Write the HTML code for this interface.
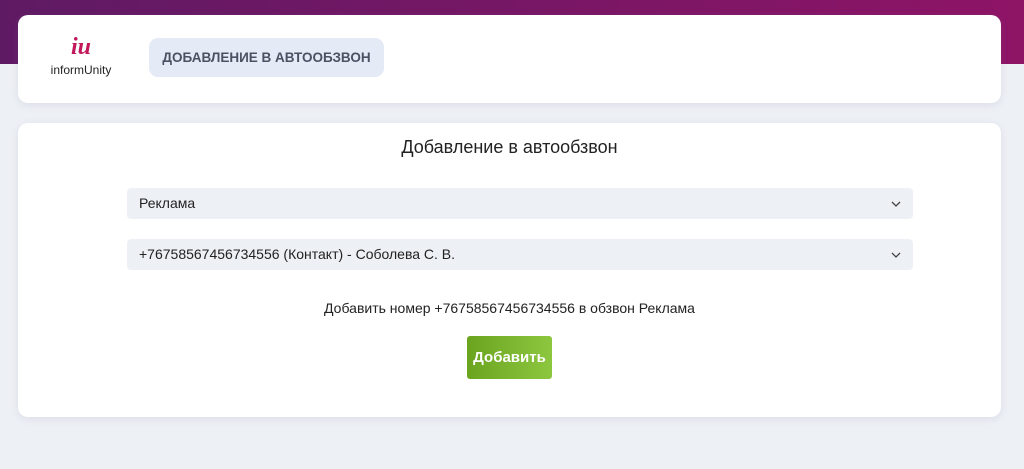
<!DOCTYPE html>
<html><head><meta charset="utf-8"><style>
*{box-sizing:border-box;margin:0;padding:0}
body{width:1024px;height:469px;background:#edf0f5;font-family:"Liberation Sans",sans-serif;position:relative;overflow:hidden}
.bg{position:absolute;left:0;top:0;width:1024px;height:64px;background:linear-gradient(90deg,#5f1a64,#8e1466)}
.card{position:absolute;left:18px;width:983px;background:#fff;border-radius:10px;box-shadow:0 2px 8px rgba(120,130,160,.15)}
.h{top:15px;height:88px}
.m{top:123px;height:294px}
.pill{position:absolute;left:131px;top:23px;width:235px;height:39px;background:#e4eaf6;border-radius:9px;color:#4b5162;font-weight:bold;font-size:13.5px;line-height:39px;text-align:center}
.logo{position:absolute;left:28px;top:21px;width:70px;text-align:center}
.sel{position:absolute;left:109px;width:786px;height:31px;background:#edf0f4;border-radius:4px;font-size:14px;color:#222;line-height:31px;padding-left:12px}
.sel svg{position:absolute;right:12px;top:13px}
.btn{position:absolute;left:449px;top:213px;width:85px;height:43px;border-radius:3px;background:linear-gradient(90deg,#6ba520,#8dc63f);color:#fff;font-weight:bold;font-size:15px;line-height:43px;text-align:center}
</style></head><body>
<div class="bg"></div>
<div class="card h">
 <div class="logo"><div style="font-family:'Liberation Serif',serif;font-style:italic;font-weight:bold;color:#c2185b;font-size:24px;line-height:22px">iu</div><div style="font-size:12px;color:#222;margin-top:5px">informUnity</div></div>
 <div class="pill">ДОБАВЛЕНИЕ В АВТООБЗВОН</div>
</div>
<div class="card m">
 <div style="position:absolute;left:0;right:0;top:14px;text-align:center;font-size:18px;color:#222">Добавление в автообзвон</div>
 <div class="sel" style="top:65px">Реклама<svg width="10" height="7" viewBox="0 0 10 7"><path d="M1 1l4 4 4-4" stroke="#444" stroke-width="1.3" fill="none"/></svg></div>
 <div class="sel" style="top:116px">+76758567456734556 (Контакт) - Соболева С. В.<svg width="10" height="7" viewBox="0 0 10 7"><path d="M1 1l4 4 4-4" stroke="#444" stroke-width="1.3" fill="none"/></svg></div>
 <div style="position:absolute;left:0;right:0;top:177px;text-align:center;font-size:14px;color:#222">Добавить номер +76758567456734556 в обзвон Реклама</div>
 <div class="btn">Добавить</div>
</div>
</body></html>
